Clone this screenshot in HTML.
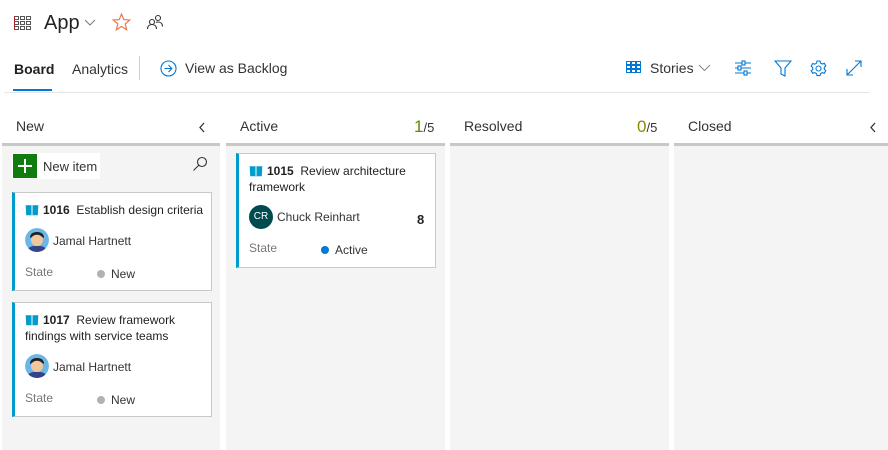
<!DOCTYPE html><html><head><style>
body{margin:0;width:888px;height:450px;background:#fff;font-family:"Liberation Sans",sans-serif;color:#333;position:relative;overflow:hidden}
.a{position:absolute}
.col{position:absolute;top:143px;height:307px;background:#f4f4f4;border-top:3px solid #c8c8c8;box-sizing:border-box}
.card{position:absolute;background:#fff;border:1px solid #c8c8c8;border-left:3px solid #009ccc;box-sizing:border-box;font-size:12px}
.t{position:absolute;left:10px;top:9px;right:6px;line-height:16px;color:#222}
.t b{font-weight:bold}
.bk{display:inline-block;vertical-align:-2px;margin-right:4px}
.av{position:absolute;left:10px;width:24px;height:24px;border-radius:50%}
.nm{position:absolute;left:38px;font-size:12px;color:#333}
.st{position:absolute;left:10px;color:#777;font-size:12px}
.sv{position:absolute;left:82px;font-size:12px;color:#333}
.dot{display:inline-block;width:8px;height:8px;border-radius:50%;margin-right:6px;vertical-align:0}
.h{position:absolute;top:118px;font-size:14px;color:#333}
</style></head><body>
<svg class="a" style="left:14px;top:16px" width="18" height="14" viewBox="0 0 18 14"><g fill="none" stroke="#555" stroke-width="1"><rect x=".5" y=".5" width="4" height="3"/><rect x="6.5" y=".5" width="4" height="3"/><rect x="12.5" y=".5" width="4" height="3"/><rect x=".5" y="5.5" width="4" height="3"/><rect x="6.5" y="5.5" width="4" height="3"/><rect x="12.5" y="5.5" width="4" height="3"/><rect x=".5" y="10.5" width="4" height="3"/><rect x="6.5" y="10.5" width="4" height="3"/><rect x="12.5" y="10.5" width="4" height="3"/></g><rect x="0" y="0" width="1" height="14" fill="#a4262c"/></svg>
<div class="a" style="left:44px;top:12px;font-size:20px;color:#222">App</div>
<svg class="a" style="left:84px;top:19px" width="12" height="8"><path d="M1 1l5 5 5-5" fill="none" stroke="#777"/></svg>
<svg class="a" style="left:112px;top:13px" width="19" height="18" viewBox="0 0 19 18"><path d="M9.5 1l2.3 5.6 6 .4-4.6 3.9 1.5 5.9-5.2-3.3-5.2 3.3 1.5-5.9L1.2 7l6-.4z" fill="none" stroke="#e87a4f" stroke-width="1.2"/></svg>
<svg class="a" style="left:146px;top:14px" width="18" height="16" viewBox="0 0 18 16"><g fill="none" stroke="#333" stroke-width="1.1"><circle cx="6" cy="8" r="2.5"/><path d="M1.5 15c0-3 2-4.5 4.5-4.5s4.5 1.5 4.5 4.5"/><circle cx="12" cy="4" r="2.5"/><path d="M10 8.5c.6-.3 1.3-.5 2-.5 2.5 0 4.5 1.5 4.5 4.5"/></g></svg>
<div class="a" style="left:14px;top:61px;font-size:14px;color:#222;font-weight:600">Board</div>
<div class="a" style="left:13px;top:89px;width:39px;height:2px;background:#0078d4"></div>
<div class="a" style="left:72px;top:61px;font-size:14px;color:#333">Analytics</div>
<div class="a" style="left:139px;top:56px;width:1px;height:24px;background:#ccc"></div>
<svg class="a" style="left:160px;top:60px" width="17" height="17" viewBox="0 0 17 17"><g fill="none" stroke="#0078d4" stroke-width="1.1"><circle cx="8.5" cy="8.5" r="7.5"/><path d="M4.5 8.5h7M8.5 5l3.3 3.5-3.3 3.5"/></g></svg>
<div class="a" style="left:185px;top:60px;font-size:14px;color:#333">View as Backlog</div>
<div class="a" style="left:4px;top:92px;width:866px;height:1px;background:#e6e6e6"></div>
<svg class="a" style="left:626px;top:61px" width="16" height="13" viewBox="0 0 16 13"><g fill="none" stroke="#0078d4" stroke-width="1"><rect x=".5" y=".5" width="4" height="3"/><rect x="5.5" y=".5" width="4" height="3"/><rect x="10.5" y=".5" width="4" height="3"/><rect x=".5" y="4.5" width="4" height="3"/><rect x="5.5" y="4.5" width="4" height="3"/><rect x="10.5" y="4.5" width="4" height="3"/><rect x=".5" y="8.5" width="4" height="3"/><rect x="5.5" y="8.5" width="4" height="3"/><rect x="10.5" y="8.5" width="4" height="3"/></g></svg>
<div class="a" style="left:650px;top:60px;font-size:14px;color:#333">Stories</div>
<svg class="a" style="left:698px;top:64px" width="13" height="8"><path d="M1 1l5.5 5.5L12 1" fill="none" stroke="#888"/></svg>
<svg class="a" style="left:734px;top:60px" width="18" height="16" viewBox="0 0 18 16"><g fill="none" stroke="#0078d4" stroke-width="1.1"><path d="M1 3h16M1 8h16M1 13h16"/><rect x="8" y="1" width="3" height="4" fill="#fff"/><rect x="4" y="6" width="3" height="4" fill="#fff"/><rect x="10" y="11" width="3" height="4" fill="#fff"/></g></svg>
<svg class="a" style="left:774px;top:60px" width="18" height="17" viewBox="0 0 18 17"><path d="M1 1h16l-6 7v8l-4-2V8z" fill="none" stroke="#0078d4" stroke-width="1.1"/></svg>
<svg class="a" style="left:810px;top:60px" width="17" height="17" viewBox="0 0 17 17"><g fill="none" stroke="#0078d4" stroke-width="1.1"><circle cx="8.5" cy="8.5" r="2.5"/><path d="M7 1h3l.5 2 1.8 1 2-.7 1.5 2.6-1.5 1.4v2l1.5 1.4-1.5 2.6-2-.7-1.8 1-.5 2H7l-.5-2-1.8-1-2 .7-1.5-2.6L2.7 9.5v-2L1.2 6.1l1.5-2.6 2 .7 1.8-1z"/></g></svg>
<svg class="a" style="left:846px;top:60px" width="16" height="16" viewBox="0 0 16 16"><g fill="none" stroke="#0078d4" stroke-width="1.1"><path d="M1 15L15 1M9 1h6v6M1 9v6h6"/></g></svg>

<div class="h" style="left:16px">New</div>
<svg class="a" style="left:198px;top:122px" width="8" height="11"><path d="M6 1L2 5.5 6 10" fill="none" stroke="#333" stroke-width="1.3"/></svg>
<div class="h" style="left:240px">Active</div>
<div class="a" style="left:414px;top:117px;font-size:17px;color:#5f8a00">1<span style="font-size:13px;color:#333">/5</span></div>
<div class="h" style="left:464px">Resolved</div>
<div class="a" style="left:637px;top:117px;font-size:17px;color:#8a8a00">0<span style="font-size:13px;color:#333">/5</span></div>
<div class="h" style="left:688px">Closed</div>
<svg class="a" style="left:869px;top:122px" width="8" height="11"><path d="M6 1L2 5.5 6 10" fill="none" stroke="#333" stroke-width="1.3"/></svg>

<div class="col" style="left:2px;width:218px"></div>
<div class="col" style="left:226px;width:219px"></div>
<div class="col" style="left:450px;width:219px"></div>
<div class="col" style="left:674px;width:214px"></div>

<div class="a" style="left:12px;top:153px;width:88px;height:26px;background:#fff"></div>
<div class="a" style="left:13px;top:154px;width:24px;height:24px;background:#107c10"></div>
<svg class="a" style="left:13px;top:154px" width="24" height="24"><path d="M12 5v14M5 12h14" stroke="#fff" stroke-width="2"/></svg>
<div class="a" style="left:43px;top:159px;font-size:13px;color:#333">New item</div>
<svg class="a" style="left:192px;top:156px" width="16" height="16"><g fill="none" stroke="#333" stroke-width="1.1"><circle cx="10" cy="6" r="4.5"/><path d="M7 9l-5.5 5.5"/></g></svg>

<svg width="0" height="0" style="position:absolute"><defs><symbol id="bk" viewBox="0 0 14 12"><path d="M1 1.5h4.5c1 0 1.5.5 1.5 1.5v8H1.5zM13 1.5H8.5c-1 0-1.5.5-1.5 1.5v8h5.5z" fill="#009ccc" stroke="#009ccc" stroke-width=".6"/><path d="M7 2v9" stroke="#fff"/></symbol></defs></svg>

<div class="card" style="left:12px;top:192px;width:200px;height:99px">
<div class="t"><svg class="bk" width="14" height="12"><use href="#bk"/></svg><b>1016</b>&nbsp; Establish design criteria</div>
<svg class="av" style="top:35px" viewBox="0 0 24 24"><circle cx="12" cy="12" r="12" fill="#6bb7e8"/><circle cx="12" cy="12" r="6" fill="#f0c8a0"/><path d="M5 10c0-5 4-6 7-6s7 1 7 6l-2-1c-2-3-8-3-10 0z" fill="#222"/><path d="M3 21c2-3 5-3 9-3s7 0 9 3c-2 2-5 3-9 3s-7-1-9-3z" fill="#334488"/></svg>
<div class="nm" style="top:41px">Jamal Hartnett</div>
<div class="st" style="top:72px">State</div>
<div class="sv" style="top:74px"><span class="dot" style="background:#b2b2b2"></span>New</div>
</div>

<div class="card" style="left:12px;top:302px;width:200px;height:115px">
<div class="t"><svg class="bk" width="14" height="12"><use href="#bk"/></svg><b>1017</b>&nbsp; Review framework findings with service teams</div>
<svg class="av" style="top:51px" viewBox="0 0 24 24"><circle cx="12" cy="12" r="12" fill="#6bb7e8"/><circle cx="12" cy="12" r="6" fill="#f0c8a0"/><path d="M5 10c0-5 4-6 7-6s7 1 7 6l-2-1c-2-3-8-3-10 0z" fill="#222"/><path d="M3 21c2-3 5-3 9-3s7 0 9 3c-2 2-5 3-9 3s-7-1-9-3z" fill="#334488"/></svg>
<div class="nm" style="top:57px">Jamal Hartnett</div>
<div class="st" style="top:88px">State</div>
<div class="sv" style="top:90px"><span class="dot" style="background:#b2b2b2"></span>New</div>
</div>

<div class="card" style="left:236px;top:153px;width:200px;height:115px">
<div class="t"><svg class="bk" width="14" height="12"><use href="#bk"/></svg><b>1015</b>&nbsp; Review architecture framework</div>
<div class="av" style="top:51px;background:#004b50;color:#fff;font-size:10px;text-align:center;line-height:24px">CR</div>
<div class="nm" style="top:56px">Chuck Reinhart</div>
<div class="a" style="left:178px;top:58px;font-size:13px;font-weight:bold;color:#222">8</div>
<div class="st" style="top:87px">State</div>
<div class="sv" style="top:89px"><span class="dot" style="background:#0078d4"></span>Active</div>
</div>
</body></html>
